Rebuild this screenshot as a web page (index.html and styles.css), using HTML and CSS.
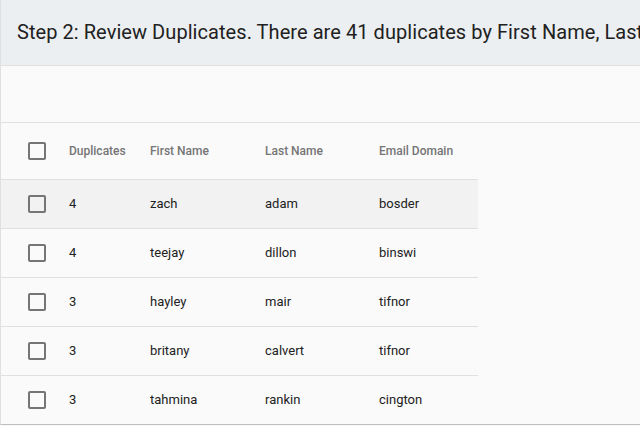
FILE: index.html
```html
<!DOCTYPE html>
<html lang="en">
<head>
  <meta charset="UTF-8">
  <meta name="viewport" content="width=device-width, initial-scale=1.0">
  <title>Review Duplicates</title>
  <link rel="stylesheet" href="styles.css">
</head>
<body>
  <div class="card">
    <header class="step">
      <h1>Step 2: Review Duplicates. There are 41 duplicates by First Name, Last Name and Email Domain</h1>
    </header>
    <div class="toolbar"></div>
    <table class="dupes">
      <thead>
        <tr>
          <th class="check"><span class="box"></span></th>
          <th class="c-dup">Duplicates</th>
          <th class="c-first">First Name</th>
          <th class="c-last">Last Name</th>
          <th class="c-mail">Email Domain</th>
        </tr>
      </thead>
      <tbody>
        <tr class="hover">
          <td class="check"><span class="box"></span></td>
          <td>4</td><td>zach</td><td>adam</td><td>bosder</td>
        </tr>
        <tr>
          <td class="check"><span class="box"></span></td>
          <td>4</td><td>teejay</td><td>dillon</td><td>binswi</td>
        </tr>
        <tr>
          <td class="check"><span class="box"></span></td>
          <td>3</td><td>hayley</td><td>mair</td><td>tifnor</td>
        </tr>
        <tr>
          <td class="check"><span class="box"></span></td>
          <td>3</td><td>britany</td><td>calvert</td><td>tifnor</td>
        </tr>
        <tr>
          <td class="check"><span class="box"></span></td>
          <td>3</td><td>tahmina</td><td>rankin</td><td>cington</td>
        </tr>
      </tbody>
    </table>
  </div>
</body>
</html>
```

FILE: styles.css
```css
:root {
  --bg: #fafafa;
  --head-bg: #eceff1;
  --line: #e0e0e0;
  --text: #212121;
  --muted: #757575;
}
* { box-sizing: border-box; margin: 0; padding: 0; }
html, body {
  background: var(--bg);
  overflow: hidden;
}
body {
  font-family: Roboto, "Noto Sans", sans-serif;
  color: var(--text);
}
.card {
  height: 425px;
  border-left: 1px solid var(--line);
  border-bottom: 1px solid #bdbdbd;
  background: var(--bg);
  overflow: hidden;
}
.step {
  height: 66px;
  background: var(--head-bg);
  border-bottom: 1px solid var(--line);
  padding: 0 0 0 16px;
  display: flex;
  align-items: center;
}
.step h1 {
  font-size: 20px;
  font-weight: 400;
  letter-spacing: 0.06px;
  white-space: nowrap;
  color: var(--text);
  padding-bottom: 2px;
}
.toolbar {
  height: 57px;
  border-bottom: 1px solid var(--line);
}
.dupes {
  width: 477px;
  border-collapse: collapse;
  table-layout: fixed;
  font-size: 13px;
}
.dupes th,
.dupes td {
  text-align: left;
  border-bottom: 1px solid var(--line);
  white-space: nowrap;
  padding: 0;
}
.dupes th {
  height: 56px;
  font-size: 12px;
  font-weight: 500;
  color: var(--muted);
}
.dupes td { height: 49px; }
.dupes tr.hover td { background: #f2f2f2; }
.dupes .check { width: 68px; padding-left: 27px; }
.dupes .c-dup { width: 81px; }
.dupes .c-first { width: 115px; }
.dupes .c-last { width: 114px; }
.box {
  display: block;
  width: 18px;
  height: 18px;
  border: 2px solid var(--muted);
  border-radius: 2px;
}
```
